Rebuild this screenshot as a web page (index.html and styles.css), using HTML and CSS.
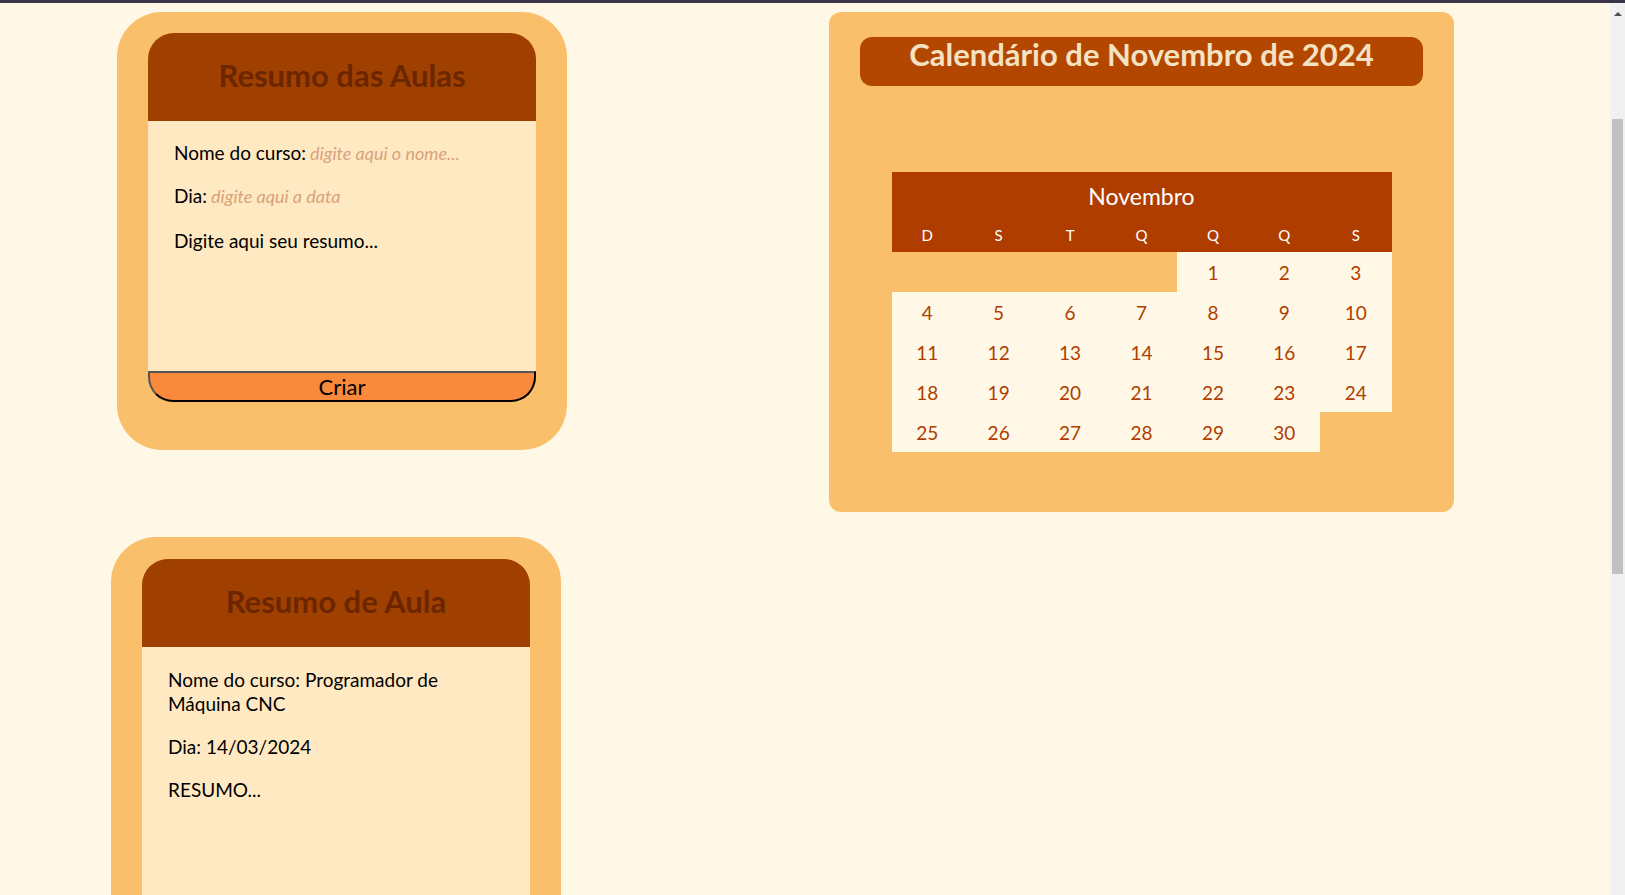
FILE: index.html
```html
<!DOCTYPE html>
<html lang="pt-BR">
<head>
<meta charset="utf-8">
<title>Resumo das Aulas</title>
<link rel="stylesheet" href="styles.css">
</head>
<body>
<div class="topbar"></div>
<main class="page">
  <div class="left-col">
    <section class="card">
      <header class="card-head"><h2>Resumo das Aulas</h2></header>
      <form class="card-body form-body">
        <p class="field"><label>Nome do curso:</label> <input type="text" placeholder="digite aqui o nome..."></p>
        <p class="field"><label>Dia:</label> <input type="text" class="short" placeholder="digite aqui a data"></p>
        <textarea class="resumo" placeholder="Digite aqui seu resumo..."></textarea>
      </form>
      <button class="criar" type="button">Criar</button>
    </section>

    <section class="card card-two">
      <header class="card-head"><h2>Resumo de Aula</h2></header>
      <div class="card-body view-body">
        <p>Nome do curso: Programador de Máquina CNC</p>
        <p>Dia: 14/03/2024</p>
        <p>RESUMO...</p>
      </div>
    </section>
  </div>

  <section class="calendar-card">
    <h1 class="cal-title">Calendário de Novembro de 2024</h1>
    <table class="cal">
      <thead>
        <tr><th colspan="7" class="month">Novembro</th></tr>
        <tr class="wd"><th>D</th><th>S</th><th>T</th><th>Q</th><th>Q</th><th>Q</th><th>S</th></tr>
      </thead>
      <tbody>
        <tr><td class="empty"></td><td class="empty"></td><td class="empty"></td><td class="empty"></td><td>1</td><td>2</td><td>3</td></tr>
        <tr><td>4</td><td>5</td><td>6</td><td>7</td><td>8</td><td>9</td><td>10</td></tr>
        <tr><td>11</td><td>12</td><td>13</td><td>14</td><td>15</td><td>16</td><td>17</td></tr>
        <tr><td>18</td><td>19</td><td>20</td><td>21</td><td>22</td><td>23</td><td>24</td></tr>
        <tr><td>25</td><td>26</td><td>27</td><td>28</td><td>29</td><td>30</td><td class="empty"></td></tr>
      </tbody>
    </table>
  </section>
</main>
<div class="scrollbar"><span class="arrow"></span><span class="thumb"></span></div>
</body>
</html>
```
FILE: styles.css
```css
html, body {
  margin: 0;
  padding: 0;
  height: 100%;
  overflow: hidden;
}
body {
  background: #fff8e6;
  font-family: "Lato", "Noto Sans", sans-serif;
  color: #000;
}
.topbar {
  height: 3px;
  background: #3a3446;
}
.page {
  display: flex;
  align-items: flex-start;
  padding: 9px 0 0 117px;
  gap: 262px;
}
.left-col {
  display: flex;
  flex-direction: column;
  width: 450px;
}
.card {
  width: 450px;
  box-sizing: border-box;
  background: #fabf6b;
  border-radius: 45px;
  padding: 21px 31px 48px;
}
.card-two {
  margin-left: -6px;
  margin-top: 87px;
  padding-top: 22px;
}
.card-head {
  background: #a04000;
  border-radius: 26px 26px 0 0;
  height: 88px;
  box-sizing: border-box;
  padding-bottom: 4px;
  display: flex;
  align-items: center;
  justify-content: center;
}
.card-head h2 {
  margin: 0;
  font-size: 31px;
  line-height: 36px;
  font-weight: 700;
  color: #6b2600;
}
.card-body {
  background: #ffe9c2;
  box-sizing: border-box;
  padding: 20px 26px 0;
  font-size: 19px;
  line-height: 24px;
}
.form-body {
  height: 250px;
  display: flex;
  flex-direction: column;
}
.field {
  margin: 0 0 19px;
  display: flex;
  align-items: baseline;
  gap: 4px;
}
.field input {
  flex: 1;
  min-width: 0;
  border: none;
  background: transparent;
  font-family: inherit;
  font-size: 18px;
  padding: 0;
  outline: none;
}
.field input::placeholder {
  color: #d9a27c;
  font-style: italic;
}
.resumo {
  flex: 1;
  border: none;
  background: transparent;
  resize: none;
  font-family: inherit;
  font-size: 19px;
  line-height: 24px;
  padding: 0;
  margin: 2px 0 0;
  outline: none;
}
.resumo::placeholder {
  color: #000;
}
.criar {
  display: block;
  width: 100%;
  height: 31px;
  background: #f98a3c;
  border: 2px solid #000;
  border-top-color: #555;
  border-left-color: #555;
  border-radius: 0 0 25px 25px;
  font-family: inherit;
  font-size: 22px;
  color: #000;
  padding: 0;
  line-height: 26px;
}
.view-body {
  height: 300px;
  padding: 21px 40px 0 26px;
}
.view-body p {
  margin: 0 0 19px;
}

.calendar-card {
  width: 625px;
  height: 500px;
  box-sizing: border-box;
  background: #fabf6b;
  border-radius: 12px;
  padding: 25px 31px 0;
}
.cal-title {
  margin: 0;
  background: #b44700;
  border-radius: 12px;
  color: #f5e2c2;
  font-size: 31px;
  font-weight: 700;
  line-height: 34px;
  padding-bottom: 15px;
  text-align: center;
}
.cal {
  margin: 86px auto 0;
  width: 500px;
  border-collapse: collapse;
  table-layout: fixed;
}
.cal thead {
  background: #b03d00;
  color: #fff;
}
.cal th {
  font-weight: 400;
  padding: 0;
}
.cal .month {
  font-size: 23px;
  height: 46px;
  box-sizing: border-box;
  vertical-align: middle;
  line-height: 28px;
  padding-top: 2px;
}
.cal .wd th {
  font-size: 15px;
  height: 34px;
}
.cal td {
  height: 40px;
  padding: 0;
  text-align: center;
  background: #fff8e6;
  color: #b03d00;
  font-size: 19px;
}
.cal td.empty {
  background: transparent;
}

.scrollbar {
  position: fixed;
  top: 3px;
  right: 0;
  width: 15px;
  bottom: 0;
  background: #f1f1f1;
}
.scrollbar .arrow {
  position: absolute;
  top: 9px;
  left: 4px;
  width: 0;
  height: 0;
  border-left: 4px solid transparent;
  border-right: 4px solid transparent;
  border-bottom: 4px solid #505050;
}
.scrollbar .thumb {
  position: absolute;
  top: 116px;
  left: 2px;
  right: 2px;
  height: 455px;
  background: #c1c1c1;
}
```
